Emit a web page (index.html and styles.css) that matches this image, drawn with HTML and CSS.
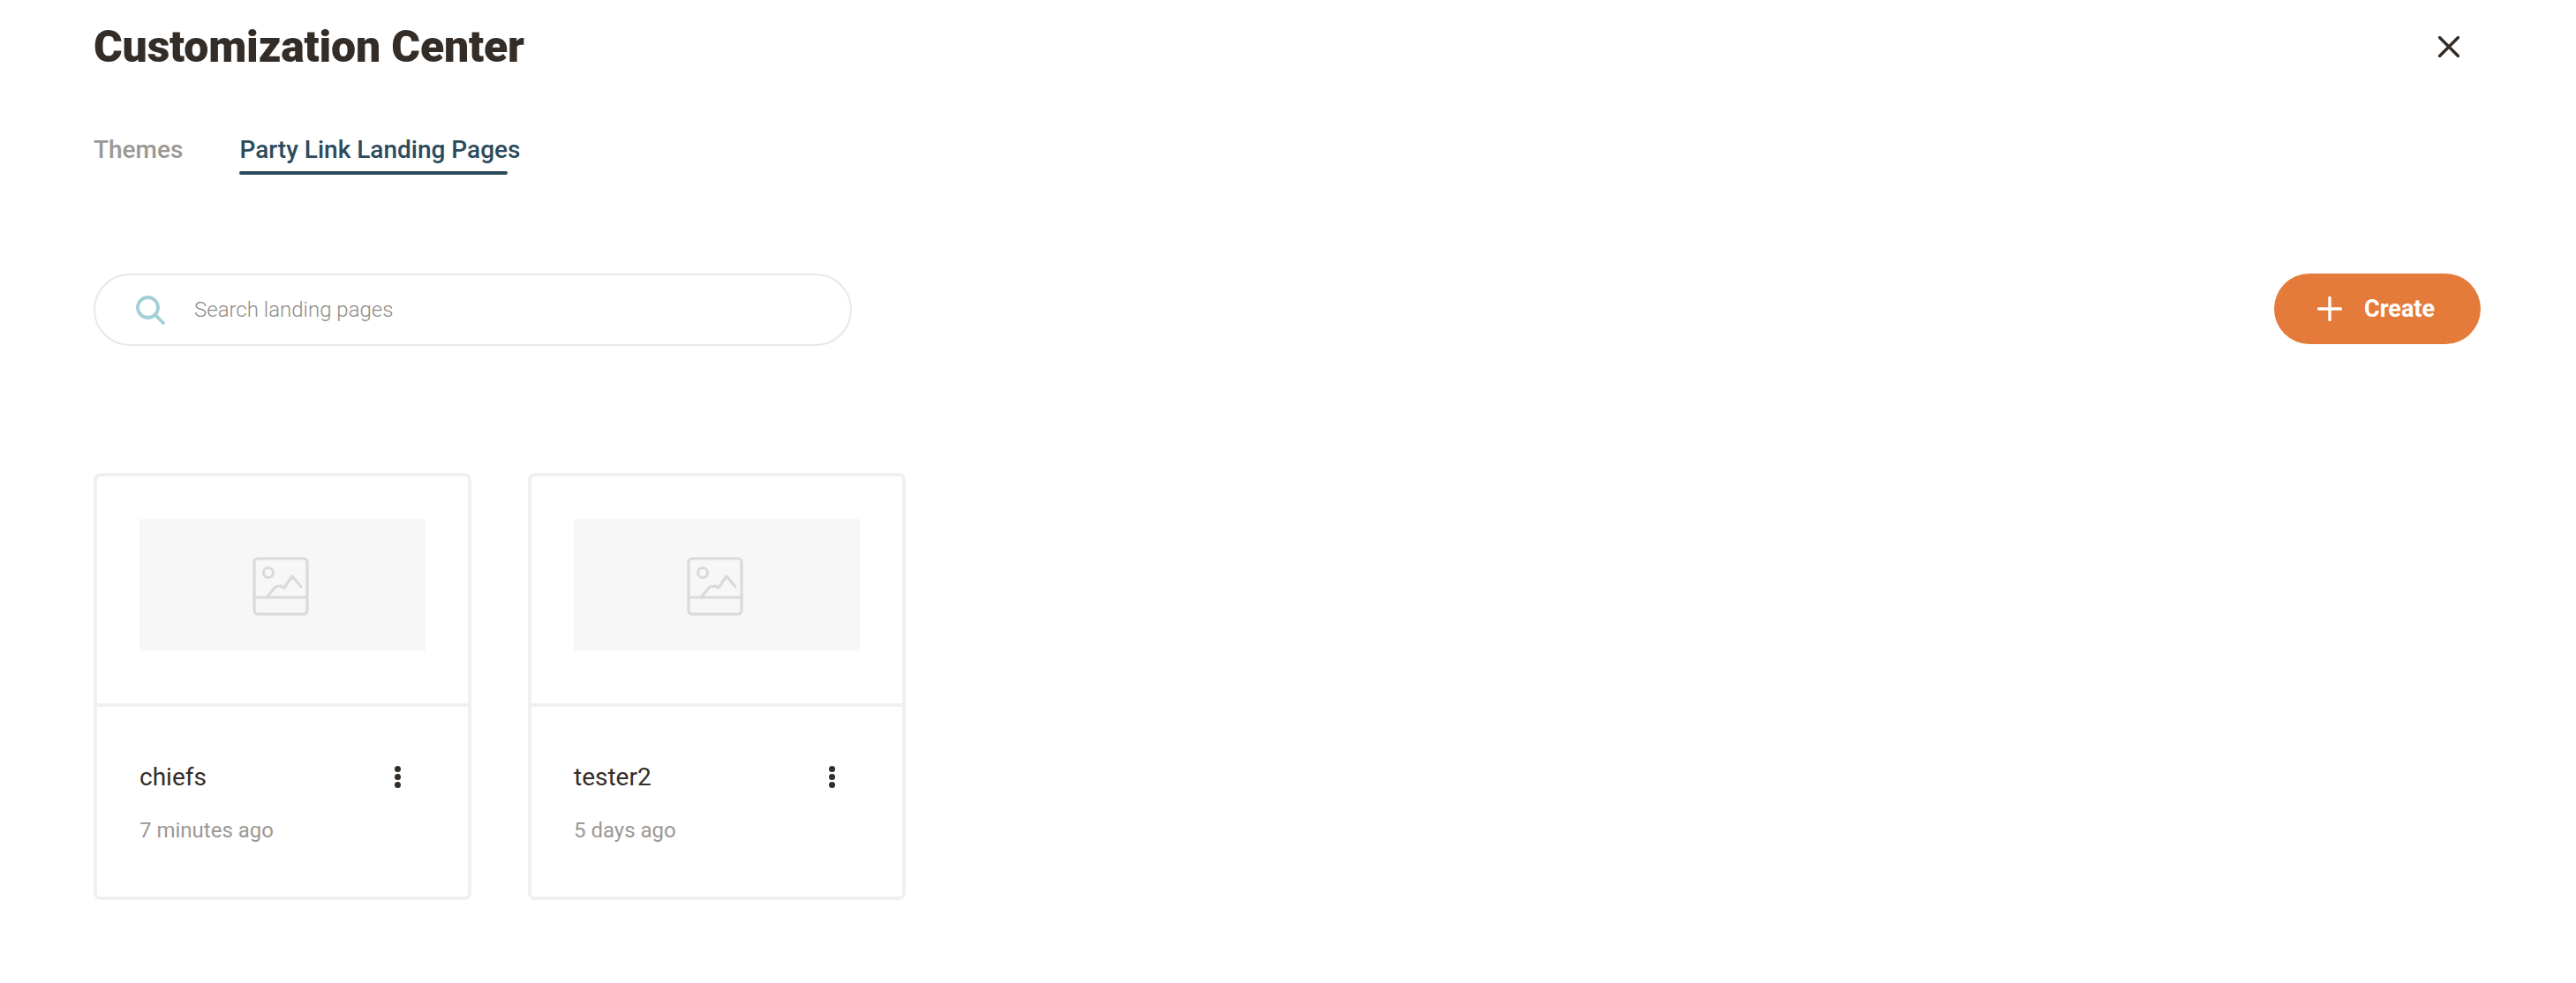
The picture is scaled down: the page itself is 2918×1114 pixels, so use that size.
FILE: index.html
```html
<!DOCTYPE html>
<html lang="en">
<head>
    <meta charset="UTF-8">
    <title>Customization Center</title>
    <link rel="stylesheet" href="styles.css">
</head>
<body>
    <div class="header">
        <h1 class="title">Customization Center</h1>
        <button class="close-button" aria-label="Close">
            <svg width="24" height="24" viewBox="0 0 24 24" fill="none" stroke="#342c26" stroke-width="3.4" stroke-linecap="round"><path d="M1.5 1.5l21 21M22.5 1.5l-21 21"/></svg>
        </button>
    </div>

    <div class="tabs">
        <div class="tab">Themes</div>
        <div class="tab tab-active">Party Link Landing Pages</div>
    </div>

    <div class="toolbar">
        <div class="search">
            <svg class="search-icon" width="33" height="33" viewBox="0 0 33 33" fill="none" stroke="#a3d0d6" stroke-width="3.8" stroke-linecap="round"><circle cx="13.5" cy="13.5" r="11.5"/><path d="M22 22l9 9"/></svg>
            <span class="search-text">Search landing pages</span>
        </div>
        <button class="create-button">
            <svg width="28" height="28" viewBox="0 0 28 28" fill="none" stroke="#fff" stroke-width="3.4" stroke-linecap="round"><path d="M14 1.5v25M1.5 14h25"/></svg>
            <span>Create</span>
        </button>
    </div>

    <div class="cards">
        <div class="card">
            <div class="card-top">
                <div class="thumb">
                    <svg class="thumb-icon" width="64" height="67" viewBox="0 0 64 67" fill="none" stroke="#dadada" stroke-width="3.2" stroke-linecap="round" stroke-linejoin="round"><rect x="2" y="2" width="60" height="63" rx="4"/><path d="M2 46h60"/><circle cx="18" cy="18" r="5.5"/><path d="M16 46l10-12 6-1 4 2 9-13 10 12"/></svg>
                </div>
            </div>
            <div class="card-body">
                <div class="card-row">
                    <span class="card-name">chiefs</span>
                    <span class="dots"><i></i><i></i><i></i></span>
                </div>
                <div class="card-date">7 minutes ago</div>
            </div>
        </div>
        <div class="card">
            <div class="card-top">
                <div class="thumb">
                    <svg class="thumb-icon" width="64" height="67" viewBox="0 0 64 67" fill="none" stroke="#dadada" stroke-width="3.2" stroke-linecap="round" stroke-linejoin="round"><rect x="2" y="2" width="60" height="63" rx="4"/><path d="M2 46h60"/><circle cx="18" cy="18" r="5.5"/><path d="M16 46l10-12 6-1 4 2 9-13 10 12"/></svg>
                </div>
            </div>
            <div class="card-body">
                <div class="card-row">
                    <span class="card-name">tester2</span>
                    <span class="dots"><i></i><i></i><i></i></span>
                </div>
                <div class="card-date">5 days ago</div>
            </div>
        </div>
    </div>
</body>
</html>
```

FILE: styles.css
```css
* {
    box-sizing: border-box;
}

body {
    margin: 0;
    padding: 26px 108px 0 106px;
    background-color: #fff;
    font-family: Roboto, "Liberation Sans", sans-serif;
    color: #342c26;
}

.header {
    display: flex;
    justify-content: space-between;
    align-items: center;
    height: 54px;
}

.title {
    margin: 0;
    font-size: 50px;
    line-height: 54px;
    font-weight: 900;
    letter-spacing: -0.2px;
    color: #342c26;
}

.close-button {
    display: flex;
    margin-right: 24px;
    padding: 0;
    border: 0;
    background: none;
}

.tabs {
    display: flex;
    gap: 64px;
    margin-top: 73px;
}

.tab {
    height: 44px;
    font-size: 28px;
    line-height: 33px;
    font-weight: 500;
    color: #9b9894;
}

.tab-active {
    position: relative;
    color: #2b4b5c;
}

.tab-active::after {
    content: "";
    position: absolute;
    left: 0;
    right: 14px;
    bottom: -1px;
    height: 4px;
    border-radius: 2px;
    background-color: #2b4b5c;
}

.toolbar {
    display: flex;
    justify-content: space-between;
    align-items: flex-start;
    margin-top: 113px;
}

.search {
    display: flex;
    align-items: center;
    gap: 33px;
    width: 859px;
    height: 82px;
    padding-left: 46px;
    border: 2px solid #e8e8e8;
    border-radius: 41px;
}

.search-text {
    font-size: 24px;
    font-weight: 300;
    color: #8f8b87;
}

.create-button {
    display: flex;
    align-items: center;
    gap: 25px;
    width: 234px;
    height: 80px;
    padding: 0 0 0 49px;
    border: 0;
    border-radius: 40px;
    background-color: #e57b3a;
    font-family: inherit;
    font-size: 27px;
    font-weight: 700;
    color: #fff;
}

.cards {
    display: flex;
    gap: 64px;
    margin-top: 144px;
}

.card {
    width: 428px;
    height: 484px;
    border: 4px solid #f0f0f0;
    border-radius: 8px;
}

.card-top {
    height: 261px;
    padding: 48px 48px 0;
    border-bottom: 4px solid #f0f0f0;
}

.thumb {
    display: flex;
    align-items: center;
    justify-content: center;
    height: 150px;
    background-color: #f7f7f7;
}

.thumb-icon {
    margin: 3px 4px 0 0;
}

.card-body {
    padding: 63px 48px 0;
}

.card-row {
    display: flex;
    justify-content: space-between;
    align-items: center;
    height: 33px;
    padding-right: 28px;
}

.card-name {
    font-size: 28px;
    color: #342c26;
}

.dots {
    display: flex;
    flex-direction: column;
    gap: 2px;
}

.dots i {
    display: block;
    width: 7px;
    height: 7px;
    border-radius: 50%;
    background-color: #342c26;
}

.card-date {
    margin-top: 30px;
    font-size: 24px;
    color: #9b9894;
}
```
